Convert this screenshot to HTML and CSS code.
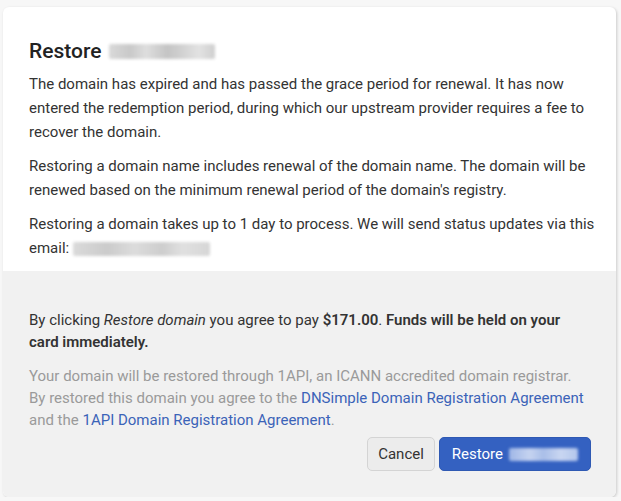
FILE: index.html
```html
<!DOCTYPE html>
<html>
<head>
<meta charset="utf-8">
<link rel="stylesheet" href="styles.css">
</head>
<body>
<div class="page">
  <div class="card">
    <div class="card-body">
      <h2 class="title">Restore <span class="blur blur-title"></span></h2>
      <p>The domain has expired and has passed the grace period for renewal. It has now entered the redemption period, during which our upstream provider requires a fee to recover the domain.</p>
      <p>Restoring a domain name includes renewal of the domain name. The domain will be renewed based on the minimum renewal period of the domain's registry.</p>
      <p>Restoring a domain takes up to 1 day to process. We will send status updates via this email: <span class="blur blur-email"></span></p>
    </div>
    <div class="card-footer">
      <p class="agree">By clicking <em>Restore domain</em> you agree to pay <strong>$171.00</strong>. <strong>Funds will be held on your card immediately.</strong></p>
      <p class="muted">Your domain will be restored through 1API, an ICANN accredited domain registrar. By restored this domain you agree to the <a href="#">DNSimple Domain Registration Agreement</a> and the <a href="#">1API Domain Registration Agreement</a>.</p>
      <div class="actions">
        <button class="btn btn-default">Cancel</button>
        <button class="btn btn-primary">Restore <span class="blur blur-btn"></span></button>
      </div>
    </div>
  </div>
</div>
</body>
</html>
```
FILE: styles.css
```css
html, body {
  margin: 0;
  padding: 0;
  background: #f7f7f7;
}
body {
  font-family: Roboto, "Liberation Sans", sans-serif;
  color: #333;
  font-size: 15px;
}
.page {
  padding: 7px 5px 0 3px;
}
.card {
  background: #fff;
  border-radius: 6px;
  box-shadow: 1px 1px 3px rgba(0,0,0,0.18);
  overflow: hidden;
  height: 490px;
  display: flex;
  flex-direction: column;
}
.card-body {
  padding: 31px 14px 11px 26px;
}
.title {
  margin: 0 0 8px;
  font-size: 21px;
  font-weight: 500;
  line-height: 26px;
  color: #222;
  display: flex;
  align-items: center;
  gap: 8px;
}
p {
  margin: 0 0 10px;
  line-height: 24px;
}
.card-body p:last-child { margin-bottom: 0; }
.blur {
  display: inline-block;
  vertical-align: middle;
  border-radius: 2px;
  filter: blur(1.5px);
}
.blur-title {
  width: 106px;
  height: 15px;
  background: linear-gradient(90deg, #d9d9d9 0%, #c9c9c9 20%, #dedede 35%, #c4c4c4 55%, #d2d2d2 70%, #e2e2e2 85%, #cfcfcf 100%);
}
.blur-email {
  width: 137px;
  height: 14px;
  background: linear-gradient(90deg, #dadada 0%, #cbcbcb 25%, #dcdcdc 45%, #cdcdcd 65%, #e0e0e0 80%, #d6d6d6 100%);
}
.card-footer {
  flex: 1;
  background: #f1f1f1;
  padding: 38px 25px 0 26px;
}
.agree {
  line-height: 22px;
  margin-bottom: 12px;
}
.agree strong { font-weight: 600; }
.muted {
  color: #9a9a9a;
  line-height: 22px;
  margin-bottom: 6px;
}
.muted a {
  color: #3b63b8;
  text-decoration: none;
}
.actions {
  display: flex;
  justify-content: flex-end;
  gap: 4px;
}
.btn {
  font-family: inherit;
  font-size: 15px;
  height: 34px;
  border-radius: 5px;
  padding: 0 10px;
  display: inline-flex;
  align-items: center;
  gap: 6px;
}
.btn-default {
  background: #ececec;
  border: 1px solid #d4d4d4;
  color: #333;
}
.btn-primary {
  background: #3461c1;
  border: 1px solid #2f59b3;
  color: #fff;
  padding: 0 12px;
}
.blur-btn {
  width: 69px;
  height: 13px;
  background: linear-gradient(90deg, #9fb6e6 0%, #c5d3f0 30%, #a9bee8 50%, #c9d6f1 75%, #b2c5ec 100%);
}
```
